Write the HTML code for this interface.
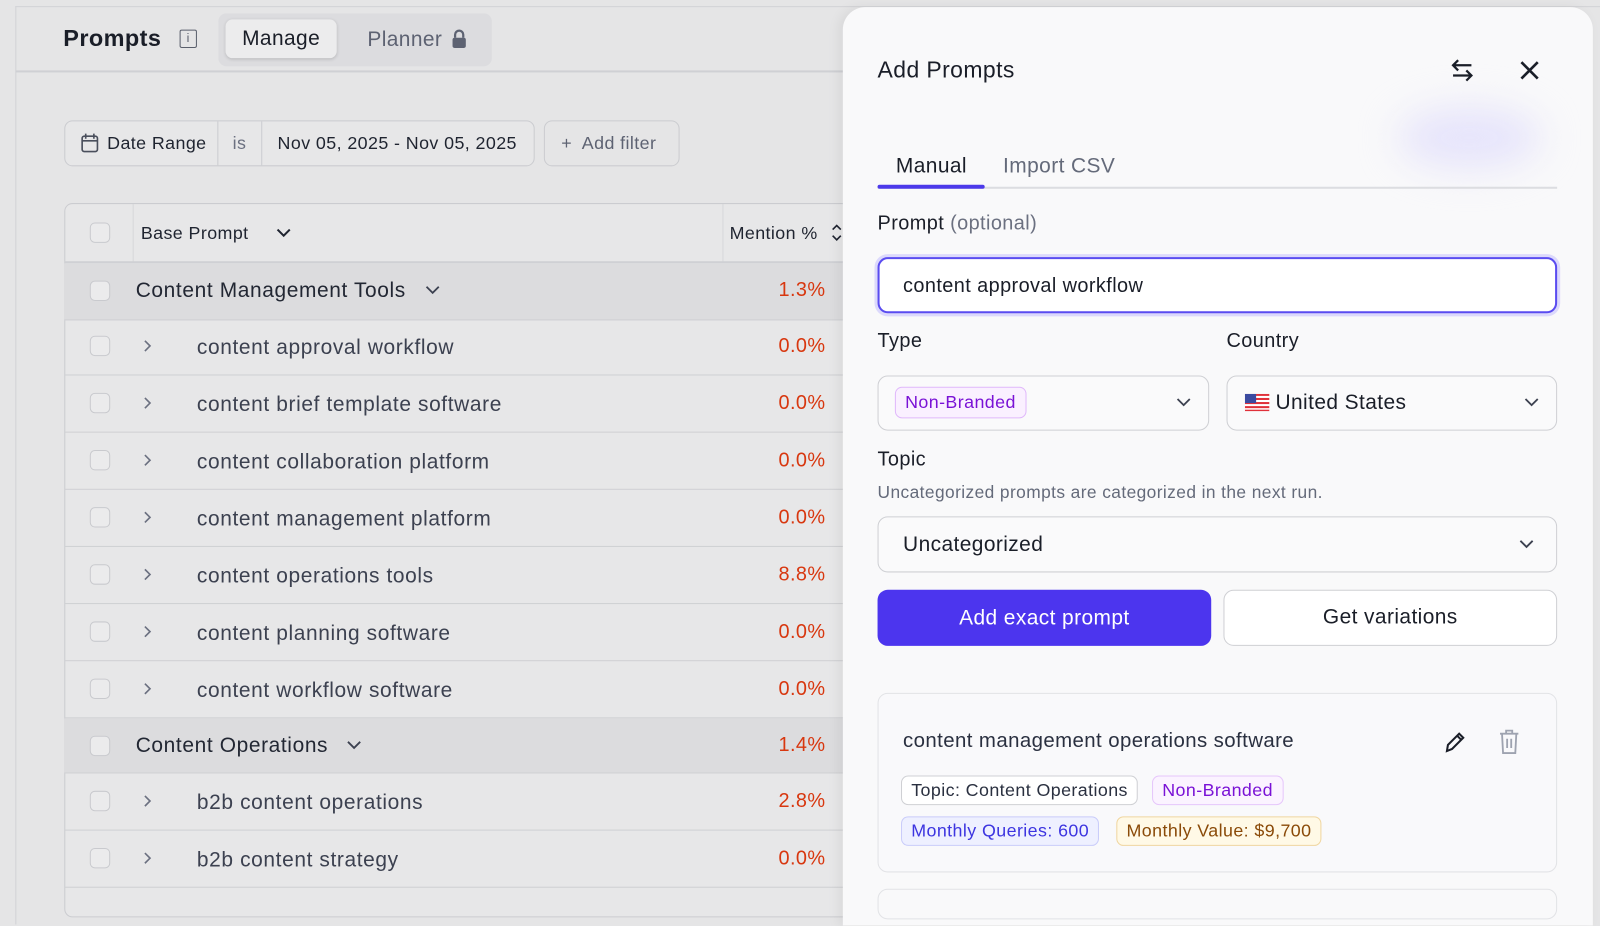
<!DOCTYPE html>
<html><head><meta charset="utf-8"><style>
*{box-sizing:border-box;margin:0;padding:0}
body{width:1600px;height:893px;overflow:hidden;background:#e5e5e6;font-family:"Liberation Sans",sans-serif;position:relative;color:#1f2430;letter-spacing:0.4px}
#w{position:absolute;left:0;top:0;width:1568px;height:880px;transform:scale(1.0204);transform-origin:0 0}
.abs{position:absolute}
.cb{position:absolute;left:88px;width:20px;height:20px;border:1.5px solid #c9cace;border-radius:5px;background:#ebebec}
.row{position:absolute;left:63px;width:770px;height:56px;border-bottom:1px solid #cfd0d3}
.row .t{position:absolute;left:130px;top:17px;font-size:20.5px;color:#3c4150;letter-spacing:0.6px}
.row .p{position:absolute;right:24px;top:16px;font-size:19.5px;color:#d8370f}
.row .ch{position:absolute;left:76px;top:20px}
.g{background:#dcdcde}
.g .t{left:70px;color:#222733}
.pill{display:inline-block;border-radius:7px;padding:3px 9px;font-size:17.5px;border:1.5px solid}
</style></head><body><div id="w">
<div class="abs" style="left:15px;top:6px;width:1600px;height:1px;background:#d2d3d6"></div>
<div class="abs" style="left:15px;top:6px;width:1px;height:900px;background:#d2d3d6"></div>
<div class="abs" style="left:15px;top:69px;width:820px;height:2px;background:#cfd0d4"></div>
<div class="abs" style="left:62px;top:24px;font-size:23px;font-weight:bold;color:#1a1e28">Prompts</div>
<div class="abs" style="left:176px;top:29px;width:17px;height:18px;border:1.5px solid #5a5f6c;border-radius:2px;font-size:12px;text-align:center;line-height:15px;color:#5a5f6c">i</div>
<div class="abs" style="left:214px;top:13px;width:268px;height:52px;background:#dcdcdf;border-radius:8px"></div>
<div class="abs" style="left:221px;top:19px;width:109px;height:38px;background:#ececed;border-radius:7px;box-shadow:0 1px 3px rgba(0,0,0,.15);font-size:20.5px;text-align:center;line-height:38px;color:#1a1e28">Manage</div>
<div class="abs" style="left:360px;top:27px;font-size:20.5px;color:#5d6272">Planner</div>
<svg class="abs" style="left:442px;top:28px" width="16" height="20" viewBox="0 0 16 20"><path d="M4 9V6a4 4 0 0 1 8 0v3" fill="none" stroke="#5d6272" stroke-width="2.2"/><rect x="1.5" y="9" width="13" height="10" rx="2" fill="#5d6272"/></svg>

<div class="abs" style="left:63px;top:118px;width:461px;height:45px;border:1.5px solid #cbccd0;border-radius:8px;background:#e7e7e8"></div>
<div class="abs" style="left:213px;top:119px;width:1px;height:43px;background:#cbccd0"></div>
<div class="abs" style="left:256px;top:119px;width:1px;height:43px;background:#cbccd0"></div>
<svg class="abs" style="left:79px;top:130px" width="18" height="20" viewBox="0 0 18 20"><rect x="1.5" y="3.5" width="15" height="15" rx="2" fill="none" stroke="#4a4f5c" stroke-width="1.6"/><path d="M1.5 8h15M5 1v5M13 1v5" stroke="#4a4f5c" stroke-width="1.6"/></svg>
<div class="abs" style="left:105px;top:130px;font-size:17.5px;color:#1f2430">Date Range</div>
<div class="abs" style="left:228px;top:130px;font-size:17.5px;color:#6b7080">is</div>
<div class="abs" style="left:272px;top:130px;font-size:17.5px;color:#1f2430">Nov 05, 2025 - Nov 05, 2025</div>
<div class="abs" style="left:533px;top:118px;width:133px;height:45px;border:1.5px solid #cbccd0;border-radius:8px;font-size:17.5px;color:#5d6272;padding:11px 0 0 16px">+&nbsp; Add filter</div>

<div class="abs" style="left:63px;top:199px;width:780px;height:700px;border:1.5px solid #cbccd0;border-radius:8px;background:#e7e7e8"></div>
<div class="cb" style="top:218px"></div>
<div class="abs" style="left:130px;top:200px;width:1px;height:57px;background:#d6d7da"></div>
<div class="abs" style="left:708px;top:200px;width:1px;height:57px;background:#d6d7da"></div>
<div class="abs" style="left:138px;top:218px;font-size:17.5px;color:#1f2430">Base Prompt</div>
<svg class="abs" style="left:270px;top:222px" width="16" height="12"><path d="M2 3l6 6 6-6" fill="none" stroke="#1f2430" stroke-width="2"/></svg>
<div class="abs" style="left:715px;top:218px;font-size:17.5px;color:#1f2430">Mention %</div>
<svg class="abs" style="left:814px;top:218px" width="12" height="20"><path d="M2 7l4-4 4 4M2 13l4 4 4-4" fill="none" stroke="#1f2430" stroke-width="1.6"/></svg>
<div class="abs" style="left:63px;top:256px;width:770px;height:2px;background:#cfd0d4"></div>

<div class="row g" style="top:258px"><div class="cb" style="left:25px;top:17px"></div><div class="t" style="top:15px">Content Management Tools</div><svg class="abs" style="left:353px;top:20px" width="16" height="12"><path d="M2 3l6 6 6-6" fill="none" stroke="#3c4150" stroke-width="1.8"/></svg><div class="p" style="top:15px">1.3%</div></div>
<div class="row" style="top:312px"><div class="cb" style="left:25px;top:17px"></div><svg class="ch" width="10" height="14"><path d="M3 2l5 5-5 5" fill="none" stroke="#6b7080" stroke-width="1.6"/></svg><div class="t">content approval workflow</div><div class="p">0.0%</div></div>
<div class="row" style="top:368px"><div class="cb" style="left:25px;top:17px"></div><svg class="ch" width="10" height="14"><path d="M3 2l5 5-5 5" fill="none" stroke="#6b7080" stroke-width="1.6"/></svg><div class="t">content brief template software</div><div class="p">0.0%</div></div>
<div class="row" style="top:424px"><div class="cb" style="left:25px;top:17px"></div><svg class="ch" width="10" height="14"><path d="M3 2l5 5-5 5" fill="none" stroke="#6b7080" stroke-width="1.6"/></svg><div class="t">content collaboration platform</div><div class="p">0.0%</div></div>
<div class="row" style="top:480px"><div class="cb" style="left:25px;top:17px"></div><svg class="ch" width="10" height="14"><path d="M3 2l5 5-5 5" fill="none" stroke="#6b7080" stroke-width="1.6"/></svg><div class="t">content management platform</div><div class="p">0.0%</div></div>
<div class="row" style="top:536px"><div class="cb" style="left:25px;top:17px"></div><svg class="ch" width="10" height="14"><path d="M3 2l5 5-5 5" fill="none" stroke="#6b7080" stroke-width="1.6"/></svg><div class="t">content operations tools</div><div class="p">8.8%</div></div>
<div class="row" style="top:592px"><div class="cb" style="left:25px;top:17px"></div><svg class="ch" width="10" height="14"><path d="M3 2l5 5-5 5" fill="none" stroke="#6b7080" stroke-width="1.6"/></svg><div class="t">content planning software</div><div class="p">0.0%</div></div>
<div class="row" style="top:648px"><div class="cb" style="left:25px;top:17px"></div><svg class="ch" width="10" height="14"><path d="M3 2l5 5-5 5" fill="none" stroke="#6b7080" stroke-width="1.6"/></svg><div class="t">content workflow software</div><div class="p">0.0%</div></div>
<div class="row g" style="top:704px;height:54px"><div class="cb" style="left:25px;top:17px"></div><div class="t" style="top:15px">Content Operations</div><svg class="abs" style="left:276px;top:20px" width="16" height="12"><path d="M2 3l6 6 6-6" fill="none" stroke="#3c4150" stroke-width="1.8"/></svg><div class="p" style="top:15px">1.4%</div></div>
<div class="row" style="top:758px"><div class="cb" style="left:25px;top:17px"></div><svg class="ch" width="10" height="14"><path d="M3 2l5 5-5 5" fill="none" stroke="#6b7080" stroke-width="1.6"/></svg><div class="t">b2b content operations</div><div class="p">2.8%</div></div>
<div class="row" style="top:814px"><div class="cb" style="left:25px;top:17px"></div><svg class="ch" width="10" height="14"><path d="M3 2l5 5-5 5" fill="none" stroke="#6b7080" stroke-width="1.6"/></svg><div class="t">b2b content strategy</div><div class="p">0.0%</div></div>

<!-- panel -->
<div class="abs" style="left:826px;top:7px;width:735px;height:900px;background:#f9f9fa;border-radius:22px 22px 0 0;box-shadow:-4px 0 12px rgba(0,0,0,.06)"></div>
<div class="abs" style="left:1370px;top:105px;width:140px;height:60px;border-radius:50%;background:#e6e4fb;filter:blur(18px)"></div>
<div class="abs" style="left:860px;top:56px;font-size:22.5px;color:#1a1e28">Add Prompts</div>
<svg class="abs" style="left:1420px;top:55px" width="26" height="28" viewBox="0 0 26 28"><path d="M22 9H4M9 4L4 9l5 5M4 19h18M17 14l5 5-5 5" fill="none" stroke="#1a1e28" stroke-width="2.2"/></svg>
<svg class="abs" style="left:1488px;top:58px" width="22" height="22"><path d="M3 3l16 16M19 3L3 19" stroke="#1a1e28" stroke-width="2.6"/></svg>
<div class="abs" style="left:878px;top:151px;font-size:20.5px;color:#1a1e28">Manual</div>
<div class="abs" style="left:983px;top:151px;font-size:20.5px;color:#646a7a">Import CSV</div>
<div class="abs" style="left:860px;top:183px;width:666px;height:2px;background:#dcdde1"></div>
<div class="abs" style="left:860px;top:181px;width:105px;height:4px;background:#4c3aea;border-radius:2px"></div>
<div class="abs" style="left:860px;top:208px;font-size:19.5px;color:#1a1e28">Prompt <span style="color:#6b7080">(optional)</span></div>
<div class="abs" style="left:860px;top:252px;width:666px;height:55px;border:2px solid #5a4cf0;border-radius:10px;box-shadow:0 0 0 3px #dcd9fc;background:#fff;font-size:19.5px;padding:15px 0 0 23px;color:#1a1e28">content approval workflow</div>
<div class="abs" style="left:860px;top:323px;font-size:19.5px;color:#1a1e28">Type</div>
<div class="abs" style="left:1202px;top:323px;font-size:19.5px;color:#1a1e28">Country</div>
<div class="abs" style="left:860px;top:368px;width:325px;height:54px;border:1.5px solid #cfd0d4;border-radius:10px;background:#fafafb"></div>
<div class="abs pill" style="left:877px;top:379px;color:#7a12d6;background:#faf0ff;border-color:#e0b8fb;padding:4px 9px">Non-Branded</div>
<svg class="abs" style="left:1152px;top:388px" width="16" height="12"><path d="M2 3l6 6 6-6" fill="none" stroke="#3c4150" stroke-width="1.8"/></svg>
<div class="abs" style="left:1202px;top:368px;width:324px;height:54px;border:1.5px solid #cfd0d4;border-radius:10px;background:#fafafb"></div>
<svg class="abs" style="left:1220px;top:386px" width="24" height="17"><rect width="24" height="17" fill="#fff"/><g fill="#e0313a"><rect y="0" width="24" height="2"/><rect y="4" width="24" height="2"/><rect y="8" width="24" height="2"/><rect y="12" width="24" height="2"/><rect y="15.5" width="24" height="1.5"/></g><rect width="11" height="9" fill="#3b4aa0"/></svg>
<div class="abs" style="left:1250px;top:383px;font-size:20.5px;color:#1a1e28">United States</div>
<svg class="abs" style="left:1493px;top:388px" width="16" height="12"><path d="M2 3l6 6 6-6" fill="none" stroke="#3c4150" stroke-width="1.8"/></svg>
<div class="abs" style="left:860px;top:439px;font-size:19.5px;color:#1a1e28">Topic</div>
<div class="abs" style="left:860px;top:473px;font-size:17px;color:#646a7a">Uncategorized prompts are categorized in the next run.</div>
<div class="abs" style="left:860px;top:506px;width:666px;height:55px;border:1.5px solid #cfd0d4;border-radius:10px;background:#fafafb;font-size:20.5px;padding:15px 0 0 24px;color:#1a1e28">Uncategorized</div>
<svg class="abs" style="left:1488px;top:527px" width="16" height="12"><path d="M2 3l6 6 6-6" fill="none" stroke="#3c4150" stroke-width="1.8"/></svg>
<div class="abs" style="left:860px;top:578px;width:327px;height:55px;background:#4c35ee;border-radius:10px;color:#fff;font-size:20.5px;text-align:center;line-height:55px">Add exact prompt</div>
<div class="abs" style="left:1199px;top:578px;width:327px;height:55px;background:#fff;border:1.5px solid #cfd0d4;border-radius:10px;color:#1a1e28;font-size:20.5px;text-align:center;line-height:52px">Get variations</div>
<div class="abs" style="left:860px;top:679px;width:666px;height:176px;border:1.5px solid #e2e3e6;border-radius:10px;background:#f9f9fb"></div>
<div class="abs" style="left:885px;top:715px;font-size:20px;color:#2a3040">content management operations software</div>
<svg class="abs" style="left:1414px;top:714px" width="24" height="26" viewBox="0 0 24 26"><path d="M4 22l1-6L16 5l4 4L9 20zM14 7l4 4" fill="none" stroke="#1a1e28" stroke-width="2"/></svg>
<svg class="abs" style="left:1468px;top:714px" width="22" height="26" viewBox="0 0 22 26"><path d="M2 5h18M8 5V2h6v3M4 5l1 19h12l1-19M9 10v9M13 10v9" fill="none" stroke="#9ea3b0" stroke-width="1.8"/></svg>
<div class="abs pill" style="left:883px;top:760px;color:#2a3040;background:#fff;border-color:#cfd0d4">Topic: Content Operations</div>
<div class="abs pill" style="left:1129px;top:760px;color:#7a12d6;background:#fbf3ff;border-color:#e6c6fb">Non-Branded</div>
<div class="abs pill" style="left:883px;top:800px;color:#3d35e0;background:#eef0ff;border-color:#c9ccfa">Monthly Queries: 600</div>
<div class="abs pill" style="left:1094px;top:800px;color:#8a4a08;background:#fff9e6;border-color:#f0d6a0">Monthly Value: $9,700</div>
<div class="abs" style="left:860px;top:871px;width:666px;height:30px;border:1.5px solid #e2e3e6;border-radius:10px"></div>
</div></body></html>
